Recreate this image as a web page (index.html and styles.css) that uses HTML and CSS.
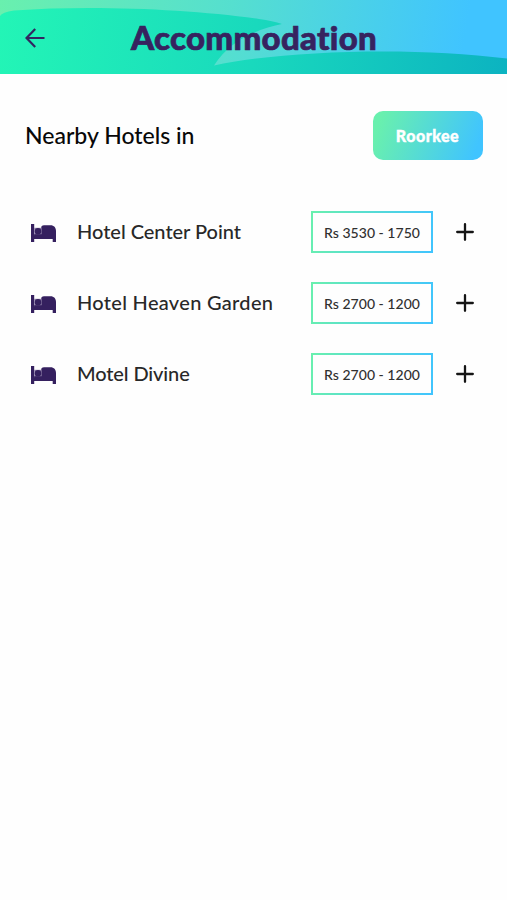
FILE: index.html
```html
<!DOCTYPE html>
<html lang="en">
<head>
<meta charset="utf-8">
<meta name="viewport" content="width=device-width, initial-scale=1">
<title>Accommodation</title>
<link rel="stylesheet" href="styles.css">
</head>
<body>
<svg class="defs" aria-hidden="true">
  <symbol id="bed" viewBox="0 0 25 18">
    <path d="M0 0h3.200v11.200h7V4C10.200 2 11 1.200 13 1.200h6.500C23 1.200 25 3.500 25 7v11h-3.300v-3H3.200v3H0z"/>
    <path class="gap" d="M3.200 3.800h7.200v7.300H3.200z"/>
    <circle cx="7" cy="7.300" r="3.200"/>
    <path d="M3.200 10.200h8V12h-8z"/>
  </symbol>
  <symbol id="plus" viewBox="0 0 18 18"><path d="M9 1.200v15.600M1.200 9h15.600"/></symbol>
</svg>
<header class="header">
  <svg class="waves" viewBox="0 0 507 74" preserveAspectRatio="none" aria-hidden="true">
    <defs>
      <linearGradient id="wave" gradientUnits="userSpaceOnUse" x1="0" y1="20" x2="507" y2="74">
        <stop offset="0" stop-color="#23f5b6"/>
        <stop offset=".5" stop-color="#19d9bd"/>
        <stop offset="1" stop-color="#0cb3c1"/>
      </linearGradient>
    </defs>
    <path fill="url(#wave)" d="M0 16Q2 12 14 10.500C90 5 190 9 259 19Q273 21 282 24C250 31 229 43 214 65.500C280 51 410 46 507 58.500V74H0z"/>
  </svg>
  <button class="back" aria-label="Back">
    <svg viewBox="0 0 20 20"><path d="M9.700 1L1 10l8.700 9M1.200 10H19"/></svg>
  </button>
  <h1 class="title">Accommodation</h1>
</header>
<main class="content">
  <div class="intro">
    <h2 class="subtitle">Nearby Hotels in</h2>
    <button class="city">Roorkee</button>
  </div>
  <ul class="hotels">
    <li class="hotel">
      <svg class="bed"><use href="#bed"/></svg>
      <span class="name name-compact">Hotel Center Point</span>
      <span class="price">Rs 3530 - 1750</span>
      <button class="add" aria-label="Add"><svg><use href="#plus"/></svg></button>
    </li>
    <li class="hotel">
      <svg class="bed"><use href="#bed"/></svg>
      <span class="name">Hotel Heaven Garden</span>
      <span class="price">Rs 2700 - 1200</span>
      <button class="add" aria-label="Add"><svg><use href="#plus"/></svg></button>
    </li>
    <li class="hotel">
      <svg class="bed"><use href="#bed"/></svg>
      <span class="name name-tight">Motel Divine</span>
      <span class="price">Rs 2700 - 1200</span>
      <button class="add" aria-label="Add"><svg><use href="#plus"/></svg></button>
    </li>
  </ul>
</main>
</body>
</html>
```
FILE: styles.css
```css
* { box-sizing: border-box; }
body {
  margin: 0;
  min-height: 900px;
  background: #fefefe;
  color: #080808;
  font-family: Lato, "Liberation Sans", sans-serif;
}
button { border: 0; padding: 0; background: none; font: inherit; }
.defs { position: absolute; width: 0; height: 0; }
.header {
  position: relative;
  display: flex;
  align-items: center;
  height: 74px;
  padding: 2px 0 0 25px;
  background: linear-gradient(98deg, #69f0ae 0%, #55dfcf 45%, #40c4ff 91%);
}
.waves { position: absolute; inset: 0; width: 100%; height: 100%; }
.back { position: relative; display: flex; width: 21px; height: 20px; }
.back svg {
  width: 21px;
  height: 20px;
  fill: none;
  stroke: #332560;
  stroke-width: 2.2;
}
.title {
  position: relative;
  margin: -2px 0 0 85px;
  color: #37235f;
  font-size: 33px;
  line-height: 40px;
  font-weight: 900;
  letter-spacing: .3px;
  -webkit-text-stroke: .7px #37235f;
  white-space: nowrap;
}
.content { padding: 37px 24.5px 0 25px; }
.intro { display: flex; justify-content: space-between; align-items: center; }
.subtitle {
  margin: -2px 0 0;
  font-size: 23px;
  line-height: 30px;
  font-weight: 500;
  letter-spacing: 0;
}
.city {
  width: 110px;
  height: 49px;
  border-radius: 10px;
  background: linear-gradient(110deg, #69f0ae 8%, #40c4ff 92%);
  color: #fff;
  font-size: 16px;
  font-weight: 900;
  letter-spacing: .5px;
  -webkit-text-stroke: .4px #fff;
}
.hotels {
  display: grid;
  gap: 29px;
  margin: 51px 0 0;
  padding: 0;
  list-style: none;
}
.hotel {
  display: grid;
  grid-template-columns: 25px 1fr 122px 41px;
  align-items: center;
  height: 42px;
  padding: 0 8.500px 0 6px;
}
.bed { width: 25px; height: 18px; margin-top: 2px; fill: #35205f; }
.gap { fill: #8f80aa; }
.name {
  padding-left: 21px;
  margin-top: -2px;
  color: #282828;
  font-size: 20px;
  line-height: 26px;
  font-weight: 500;
  letter-spacing: .3px;
  white-space: nowrap;
}
.name-compact { letter-spacing: -.02px; }
.name-tight { letter-spacing: -.12px; }
.price {
  display: flex;
  align-items: center;
  justify-content: center;
  height: 42px;
  border: 2px solid;
  border-image: linear-gradient(100deg, #69f0ae, #40c4ff) 1;
  color: #303030;
  font-size: 14px;
  font-weight: 500;
  letter-spacing: .02px;
  white-space: nowrap;
}
.add { display: flex; width: 18px; height: 18px; margin-left: 23px; }
.add svg { width: 18px; height: 18px; stroke: #151515; stroke-width: 2.3; stroke-linecap: round; }
```
